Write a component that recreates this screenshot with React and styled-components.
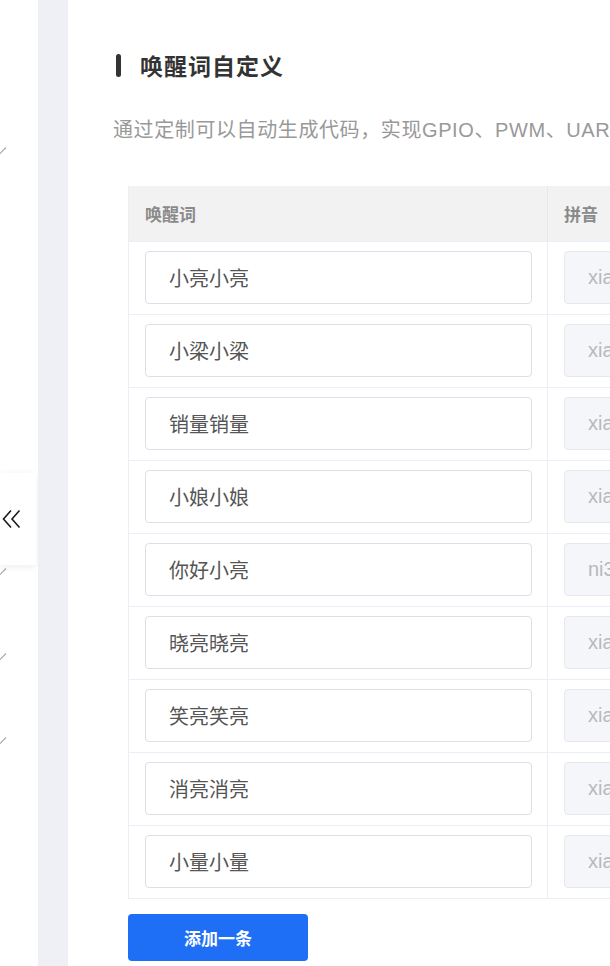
import styled, { createGlobalStyle } from "styled-components";

const GlobalStyle = createGlobalStyle`
  html, body {
    margin: 0;
    padding: 0;
    background: #ffffff;
    overflow: hidden;
  }
  * {
    box-sizing: border-box;
  }
  body {
    font-family: "Liberation Sans", "Noto Sans CJK SC", "Noto Sans", sans-serif;
  }
`;

const Page = styled.div`
  display: flex;
  width: 610px;
  height: 966px;
  overflow: hidden;
`;

const Sidebar = styled.aside`
  position: relative;
  flex: 0 0 38px;
  background: #ffffff;
  overflow: hidden;
`;

const Menu = styled.ul`
  list-style: none;
  margin: 0;
  padding: 108px 0 0;
`;

const MenuItem = styled.li`
  position: relative;
  height: 84.25px;
  display: flex;
  align-items: center;
`;

const Arrow = styled.svg`
  position: absolute;
  left: -7px;
  top: 50%;
  margin-top: -4px;
  width: 14px;
  height: 9px;
  visibility: ${(p) => (p.$hidden ? "hidden" : "visible")};
`;

const Collapse = styled.button`
  position: absolute;
  left: 0;
  top: 473px;
  width: 36px;
  height: 92px;
  border: none;
  padding: 0 0 0 2px;
  background: #ffffff;
  box-shadow: 0 2px 8px rgba(0, 0, 0, 0.07);
  display: flex;
  align-items: center;
  cursor: pointer;
`;

const Gutter = styled.div`
  flex: 0 0 30px;
  background: #eff0f5;
`;

const Main = styled.main`
  flex: 1;
  min-width: 0;
  overflow: hidden;
  padding: 48px 0 0 45px;
`;

const Heading = styled.h2`
  display: flex;
  align-items: center;
  gap: 19px;
  margin: 0 0 0 3px;
  height: 34px;
  font-size: 23px;
  letter-spacing: 1px;
  font-weight: 700;
  color: #333333;
  white-space: nowrap;

  &::before {
    content: "";
    width: 5px;
    height: 23px;
    border-radius: 3px;
    background: #333333;
  }
`;

const Desc = styled.p`
  margin: 30px 0 0;
  height: 36px;
  line-height: 36px;
  font-size: 20px;
  letter-spacing: 0.6px;
  color: #999999;
  white-space: nowrap;
`;

const Table = styled.table`
  margin: 38px 0 0 15px;
  width: 900px;
  border-collapse: collapse;
  table-layout: fixed;
  border-left: 1px solid #ebeef5;
  border-bottom: 1px solid #ebeef5;
`;

const Th = styled.th`
  height: 55px;
  padding: 0 16px;
  background: #f2f2f2;
  text-align: left;
  font-size: 17px;
  font-weight: 700;
  color: #8a8a8a;
  border-right: 1px solid #e8e8e8;
  width: ${(p) => p.$w || "auto"};
`;

const Td = styled.td`
  height: 73px;
  padding: 0 15px 0 16px;
  border-top: 1px solid #ebeef5;
  border-right: 1px solid #ebeef5;
  vertical-align: middle;
`;

const Field = styled.input`
  display: block;
  width: 100%;
  height: 53px;
  padding: 0 23px;
  border: 1px solid #dcdfe6;
  border-radius: 4px;
  font-family: inherit;
  font-size: 20px;
  color: ${(p) => (p.disabled ? "#b8b8bd" : "#555555")};
  background: ${(p) => (p.disabled ? "#f5f6f9" : "#ffffff")};
  border-color: ${(p) => (p.disabled ? "#e6e8ee" : "#dcdfe6")};
  outline: none;

  &:disabled {
    -webkit-text-fill-color: #b8b8bd;
  }
`;

const AddButton = styled.button`
  margin: 15px 0 0 15px;
  width: 180px;
  height: 47px;
  border: none;
  border-radius: 4px;
  background: #1f6ff6;
  color: #ffffff;
  font-family: inherit;
  font-size: 17px;
  font-weight: 700;
  cursor: pointer;
`;

const words = [
  ["小亮小亮", "xiao3liang4xiao3liang4"],
  ["小梁小梁", "xiao3liang2xiao3liang2"],
  ["销量销量", "xiao1liang4xiao1liang4"],
  ["小娘小娘", "xiao3niang2xiao3niang2"],
  ["你好小亮", "ni3hao3xiao3liang4"],
  ["晓亮晓亮", "xiao3liang4xiao3liang4"],
  ["笑亮笑亮", "xiao4liang4xiao4liang4"],
  ["消亮消亮", "xiao1liang4xiao1liang4"],
  ["小量小量", "xiao3liang4xiao3liang4"],
];

const menuArrows = [true, false, false, false, true, true, true, true, false];

export default function App() {
  return (
    <Page>
      <GlobalStyle />
      <Sidebar>
        <Menu>
          {menuArrows.map((show, i) => (
            <MenuItem key={i}>
              <Arrow $hidden={!show} viewBox="0 0 14 9">
                <path d="M1 1.5 L7 7.5 L13 1.5" fill="none" stroke="#a8a8a8" strokeWidth="1.2" />
              </Arrow>
            </MenuItem>
          ))}
        </Menu>
        <Collapse aria-label="收起">
          <svg width="20" height="20" viewBox="0 0 20 20">
            <path d="M9 1.5 L1.5 10 L9 18.5" fill="none" stroke="#1a1a1a" strokeWidth="1.6" />
            <path d="M17.5 1.5 L10 10 L17.5 18.5" fill="none" stroke="#1a1a1a" strokeWidth="1.6" />
          </svg>
        </Collapse>
      </Sidebar>
      <Gutter />
      <Main>
        <Heading>唤醒词自定义</Heading>
        <Desc>通过定制可以自动生成代码，实现GPIO、PWM、UART、I2C等外设的控制</Desc>
        <Table>
          <thead>
            <tr>
              <Th $w="419px">唤醒词</Th>
              <Th>拼音</Th>
            </tr>
          </thead>
          <tbody>
            {words.map(([w, py]) => (
              <tr key={w}>
                <Td>
                  <Field defaultValue={w} />
                </Td>
                <Td>
                  <Field defaultValue={py} disabled />
                </Td>
              </tr>
            ))}
          </tbody>
        </Table>
        <AddButton>添加一条</AddButton>
      </Main>
    </Page>
  );
}
